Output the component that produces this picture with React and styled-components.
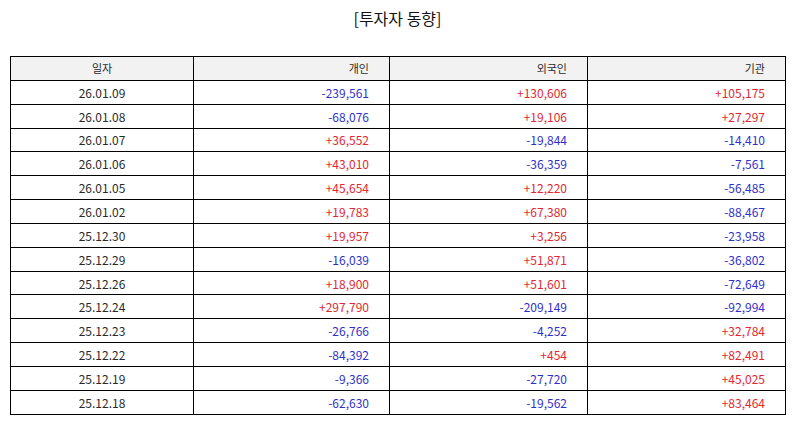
import React from "react";
import styled, { createGlobalStyle } from "styled-components";

const GlobalStyle = createGlobalStyle`
  html, body {
    margin: 0;
    padding: 0;
    background: #ffffff;
  }
  body {
    font-family: "Noto Sans CJK KR", "Noto Sans", sans-serif;
  }
`;

const Page = styled.div`
  width: 794px;
  padding: 0 9px 0 10px;
  box-sizing: border-box;
`;

const Title = styled.h1`
  margin: 0;
  height: 56px;
  padding-top: 5px;
  box-sizing: border-box;
  text-align: center;
  font-size: 16px;
  font-weight: 400;
  line-height: 26px;
  color: #111;
`;

const Table = styled.table`
  width: 775px;
  border-collapse: collapse;
  table-layout: fixed;
  color: #2a2a2a;
`;

const HeadCell = styled.th`
  height: 22.85px;
  padding: 0 20px;
  border: 1px solid #000;
  background: #f2f2f2;
  font-size: 11px;
  font-weight: 400;
  text-align: ${(p) => (p.$center ? "center" : "right")};
`;

const Cell = styled.td`
  height: 22.85px;
  padding: 0 20px 0 20px;
  border: 1px solid #000;
  font-size: 12px;
  text-align: ${(p) => (p.$center ? "center" : "right")};
  color: ${(p) =>
    p.$sign === "+" ? "#e3262f" : p.$sign === "-" ? "#2f2fcc" : "#2a2a2a"};
`;

const rows = [
  ["26.01.09", "-239,561", "+130,606", "+105,175"],
  ["26.01.08", "-68,076", "+19,106", "+27,297"],
  ["26.01.07", "+36,552", "-19,844", "-14,410"],
  ["26.01.06", "+43,010", "-36,359", "-7,561"],
  ["26.01.05", "+45,654", "+12,220", "-56,485"],
  ["26.01.02", "+19,783", "+67,380", "-88,467"],
  ["25.12.30", "+19,957", "+3,256", "-23,958"],
  ["25.12.29", "-16,039", "+51,871", "-36,802"],
  ["25.12.26", "+18,900", "+51,601", "-72,649"],
  ["25.12.24", "+297,790", "-209,149", "-92,994"],
  ["25.12.23", "-26,766", "-4,252", "+32,784"],
  ["25.12.22", "-84,392", "+454", "+82,491"],
  ["25.12.19", "-9,366", "-27,720", "+45,025"],
  ["25.12.18", "-62,630", "-19,562", "+83,464"],
];

const App = () => {
  return (
    <Page>
      <GlobalStyle />
      <Title>[투자자 동향]</Title>
      <Table>
        <colgroup>
          <col style={{ width: "183px" }} />
          <col style={{ width: "196px" }} />
          <col style={{ width: "198px" }} />
          <col style={{ width: "198px" }} />
        </colgroup>
        <thead>
          <tr>
            <HeadCell $center>일자</HeadCell>
            <HeadCell>개인</HeadCell>
            <HeadCell>외국인</HeadCell>
            <HeadCell>기관</HeadCell>
          </tr>
        </thead>
        <tbody>
          {rows.map((r) => (
            <tr key={r[0]}>
              <Cell $center>{r[0]}</Cell>
              {r.slice(1).map((v, i) => (
                <Cell key={i} $sign={v[0]}>
                  {v}
                </Cell>
              ))}
            </tr>
          ))}
        </tbody>
      </Table>
    </Page>
  );
};

export default App;
